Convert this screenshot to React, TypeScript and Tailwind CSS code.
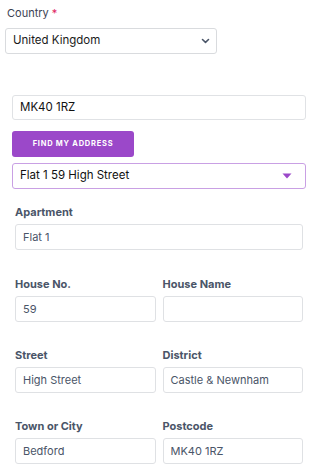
import React from "react";

const font = { fontFamily: "Inter, 'Noto Sans', sans-serif" };

function Field({ label, value }: { label: string; value: string }) {
  return (
    <div className="flex flex-col">
      <div className="text-[11px] leading-[16px] font-bold text-[#4a5568] h-[16px]">{label}</div>
      <div className="mt-[4px] h-[26px] border border-[#dfe1e4] rounded-[3px] bg-white flex items-center px-[7px] text-[11px] text-[#4a5568]">
        {value}
      </div>
    </div>
  );
}

export default function App() {
  return (
    <div className="w-[325px] h-[472px] bg-white relative overflow-hidden" style={font}>
      <div className="pl-[7px] pt-[4px]">
        <div className="text-[11px] leading-[18px] text-[#3b4252]">
          Country <span className="text-[#e0245e]">*</span>
        </div>
      </div>
      <div className="pl-[5px]">
        <div className="mt-[6px] w-[212px] h-[26px] border border-[#d9dbde] rounded-[3px] flex items-center justify-between pl-[7px] pr-[6px] text-[11.5px] text-[#1a1a1a]">
          <span>United Kingdom</span>
          <svg width="9" height="6" viewBox="0 0 9 6">
            <path d="M1.5 1.5 L4.5 4.3 L7.5 1.5" stroke="#4a5568" strokeWidth="1.6" fill="none" strokeLinecap="round" strokeLinejoin="round" />
          </svg>
        </div>
      </div>

      <div className="pl-[12px] mt-[41px] w-[306px]">
        <div className="h-[25px] border border-[#e0e2e5] rounded-[3px] flex items-center px-[7px] text-[11.5px] text-[#111]">
          MK40 1RZ
        </div>
        <div className="mt-[11px] w-[122px] h-[26px] rounded-[3px] bg-[#9b48c9] flex items-center justify-center text-[7.5px] font-bold tracking-[0.1em] text-white">
          FIND MY ADDRESS
        </div>
        <div className="mt-[6px] h-[26px] border border-[#c9a0e4] rounded-[3px] flex items-center justify-between pl-[7px] pr-[13px] text-[11.5px] text-[#111]">
          <span>Flat 1 59 High Street</span>
          <svg width="10" height="6" viewBox="0 0 10 6">
            <path d="M0.5 0.5 L9.5 0.5 L5 5.5 Z" fill="#9b48c9" />
          </svg>
        </div>
      </div>

      <div className="pl-[15px] w-[303px] mt-[15px] flex flex-col">
        <Field label="Apartment" value="Flat 1" />
        <div className="mt-[26px] grid grid-cols-2 gap-x-[7px]">
          <Field label="House No." value="59" />
          <Field label="House Name" value="" />
        </div>
        <div className="mt-[25px] grid grid-cols-2 gap-x-[7px]">
          <Field label="Street" value="High Street" />
          <Field label="District" value="Castle & Newnham" />
        </div>
        <div className="mt-[25px] grid grid-cols-2 gap-x-[7px]">
          <Field label="Town or City" value="Bedford" />
          <Field label="Postcode" value="MK40 1RZ" />
        </div>
      </div>
    </div>
  );
}
